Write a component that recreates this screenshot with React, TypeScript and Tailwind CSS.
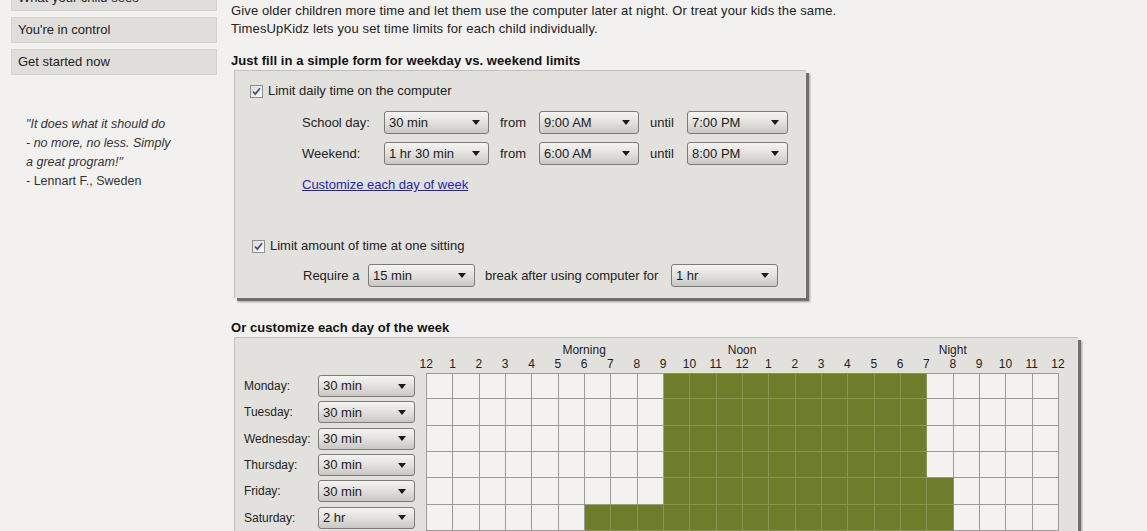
import React from "react";

type DayRow = { day: string; value: string; start: number; end: number };

const DAYS: DayRow[] = [
  { day: "Monday:", value: "30 min", start: 9, end: 19 },
  { day: "Tuesday:", value: "30 min", start: 9, end: 19 },
  { day: "Wednesday:", value: "30 min", start: 9, end: 19 },
  { day: "Thursday:", value: "30 min", start: 9, end: 19 },
  { day: "Friday:", value: "30 min", start: 9, end: 20 },
  { day: "Saturday:", value: "2 hr", start: 6, end: 20 },
];

const HOURS = ["12", "1", "2", "3", "4", "5", "6", "7", "8", "9", "10", "11", "12", "1", "2", "3", "4", "5", "6", "7", "8", "9", "10", "11", "12"];

function Select({ value, className }: { value: string; className: string }) {
  return (
    <div
      className={`flex items-center justify-between rounded-[3px] border border-[#7d7b78] bg-gradient-to-b from-[#f5f4f2] via-[#e3e1de] to-[#c9c7c4] pl-[4px] pr-[8px] text-[13px] text-[#1a1a1a] ${className}`}
    >
      <span>{value}</span>
      <svg width="8" height="5" viewBox="0 0 8 5">
        <path d="M0 0h8L4 5z" fill="#1a1a1a" />
      </svg>
    </div>
  );
}

function Checkbox() {
  return (
    <div className="flex h-[13px] w-[13px] items-center justify-center border border-[#8e8f8f] bg-gradient-to-br from-[#dcdcdc] to-[#fbfbfb]">
      <svg width="9" height="9" viewBox="0 0 9 9">
        <path d="M1 4.5l2.3 2.6L8 1.2" fill="none" stroke="#3d4f88" strokeWidth="1.7" />
      </svg>
    </div>
  );
}

function Panel({ className, children }: { className: string; children: React.ReactNode }) {
  return (
    <div
      className={`ml-[3px] border-l border-t border-[#c2c0bd] bg-[#e3e1de] shadow-[3px_3px_0_#6f6f6f,4px_4px_2px_rgba(0,0,0,0.35)] ${className}`}
    >
      {children}
    </div>
  );
}

export default function App() {
  return (
    <div className="flex min-h-screen bg-[#f2f1ef] font-['Liberation_Sans',Arial,sans-serif] text-[13px] text-[#222]">
      {/* Left nav */}
      <aside className="w-[231px] shrink-0 pl-[11px] pr-[14px]">
        <div className="-mt-[15px] flex flex-col gap-[6px]">
          {["What your child sees", "You're in control", "Get started now"].map((t) => (
            <div
              key={t}
              className="flex h-[26px] items-center border border-[#d3d1ce] bg-[#e0dedb] pl-[6px] text-[13px] text-[#222]"
            >
              {t}
            </div>
          ))}
        </div>
        <div className="mt-[40px] pl-[15px] text-[12.5px] leading-[19px] text-[#333]">
          <div className="italic">"It does what it should do</div>
          <div className="italic">- no more, no less. Simply</div>
          <div className="italic">a great program!"</div>
          <div>- Lennart F., Sweden</div>
        </div>
      </aside>

      {/* Main */}
      <main className="pt-[2px]">
        <p className="leading-[18px] tracking-[0.13px]">
          Give older children more time and let them use the computer later at night. Or treat your kids the same.
          <br />
          TimesUpKidz lets you set time limits for each child individually.
        </p>

        <h3 className="mt-[14px] text-[13px] font-bold leading-[18px] tracking-[0.07px] text-[#111]">
          Just fill in a simple form for weekday vs. weekend limits
        </h3>

        <Panel className="w-[572px] pb-[11px] pl-[15px] pt-[10px]">
          <div className="flex h-[20px] items-center gap-[5px]">
            <Checkbox />
            <span>Limit daily time on the computer</span>
          </div>

          <div className="mt-[10px] flex flex-col gap-[8px] pl-[52px]">
            {[
              ["School day:", "30 min", "9:00 AM", "7:00 PM"],
              ["Weekend:", "1 hr 30 min", "6:00 AM", "8:00 PM"],
            ].map(([label, amount, from, until]) => (
              <div key={label} className="flex h-[23px] items-center">
                <span className="w-[82px]">{label}</span>
                <Select value={amount} className="h-[23px] w-[105px]" />
                <span className="w-[50px] pl-[11px]">from</span>
                <Select value={from} className="h-[23px] w-[100px]" />
                <span className="w-[48px] pl-[11px]">until</span>
                <Select value={until} className="h-[23px] w-[101px]" />
              </div>
            ))}
          </div>

          <div className="mt-[11px] pl-[52px] leading-[18px]">
            <a href="#" className="text-[#1f1fb5] underline">
              Customize each day of week
            </a>
          </div>

          <div className="ml-[2px] mt-[42px] flex h-[20px] items-center gap-[5px]">
            <Checkbox />
            <span>Limit amount of time at one sitting</span>
          </div>

          <div className="mt-[8px] flex h-[23px] items-center pl-[53px]">
            <span className="w-[65px]">Require a</span>
            <Select value="15 min" className="h-[23px] w-[107px]" />
            <span className="w-[196px] pl-[10px]">break after using computer for</span>
            <Select value="1 hr" className="h-[23px] w-[107px]" />
          </div>
        </Panel>

        <h3 className="mt-[21px] text-[13px] font-bold leading-[18px] tracking-[0.07px] text-[#111]">
          Or customize each day of the week
        </h3>

        <Panel className="w-[844px] pb-[20px] pl-[9px] pt-[5px]">
          {/* Header */}
          <div className="flex">
            <div className="w-[182px] shrink-0" />
            <div className="-ml-[13px] text-[12px] text-[#222]">
              <div className="flex h-[14px] items-center">
                {HOURS.map((_, i) => (
                  <div key={i} className="flex w-[26.33px] justify-center whitespace-nowrap">
                    {i === 6 ? "Morning" : i === 12 ? "Noon" : i === 20 ? "Night" : ""}
                  </div>
                ))}
              </div>
              <div className="flex h-[14px] items-center">
                {HOURS.map((h, i) => (
                  <div key={i} className="flex w-[26.33px] justify-center">
                    {h}
                  </div>
                ))}
              </div>
            </div>
          </div>

          {/* Rows */}
          <div className="mt-[2px]">
            {DAYS.map((d, r) => (
              <div key={d.day} className="flex h-[26.33px]">
                <div className="flex w-[182px] shrink-0 items-center text-[12px] text-[#222]">
                  <span className="w-[74px]">{d.day}</span>
                  <Select value={d.value} className="h-[22px] w-[97px] text-[12px]" />
                </div>
                <div className="flex border-l border-[#9c9a97]">
                  {Array.from({ length: 24 }).map((_, c) => {
                    const on = c >= d.start && c < d.end;
                    return (
                      <div
                        key={c}
                        className={`h-full w-[26.33px] border-b border-r ${r === 0 ? "border-t" : ""} ${
                          on ? "border-[#8a9552] bg-[#6e7d2b]" : "border-[#9c9a97] bg-[#f3f2f0]"
                        }`}
                      />
                    );
                  })}
                </div>
              </div>
            ))}
          </div>
        </Panel>
      </main>
    </div>
  );
}
